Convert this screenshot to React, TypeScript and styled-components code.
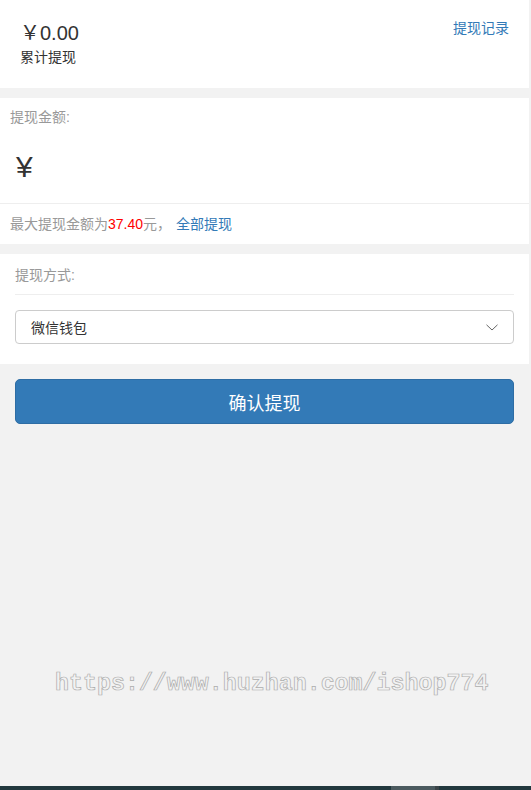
import React from "react";
import styled, { createGlobalStyle } from "styled-components";

const GlobalStyle = createGlobalStyle`
  html, body { margin: 0; padding: 0; background: #f2f2f2; }
  body {
    font-family: "Liberation Sans", "Noto Sans CJK SC", sans-serif;
    font-size: 14px;
    color: #333;
  }
  * { box-sizing: border-box; }
`;

const Page = styled.div`
  position: relative;
  min-height: 100vh;
  display: flex;
  flex-direction: column;
  background: #f2f2f2;
`;

const Panel = styled.section<{ $gap?: number }>`
  background: #fff;
  width: calc(100% - 2px);
  margin-bottom: ${(p) => p.$gap ?? 10}px;
`;

const Summary = styled(Panel)`
  height: 88px;
  padding: 19px 20px 0 20px;
  display: flex;
  justify-content: space-between;
  align-items: flex-start;
`;

const SummaryLeft = styled.div`
  display: flex;
  flex-direction: column;
`;

const Total = styled.div`
  font-size: 20px;
  line-height: 28px;
  color: #333;
`;

const TotalLabel = styled.div`
  font-size: 14px;
  line-height: 20px;
  color: #333;
`;

const RecordLink = styled.a`
  font-size: 14px;
  line-height: 20px;
  color: #337ab7;
  text-decoration: none;
  margin-top: -1px;
`;

const AmountPanel = styled(Panel)`
  padding-top: 9px;
`;

const FieldLabel = styled.div`
  padding: 0 10px;
  line-height: 20px;
  color: #999;
`;

const AmountRow = styled.div`
  display: flex;
  align-items: center;
  height: 40px;
  margin: 20px 0 16px;
  padding: 0 16px;
`;

const Yen = styled.span`
  font-family: "Liberation Sans", sans-serif;
  font-size: 30px;
  line-height: 40px;
  color: #333;
`;

const AmountInput = styled.input`
  flex: 1;
  border: none;
  outline: none;
  background: transparent;
  font-size: 30px;
  height: 40px;
  margin-left: 6px;
  padding: 0;
  color: #333;
`;

const Divider = styled.div`
  height: 1px;
  background: #eee;
`;

const Hint = styled.div`
  padding: 10px;
  line-height: 20px;
  color: #999;
`;

const Red = styled.span`
  color: #f00;
`;

const AllLink = styled.a`
  color: #337ab7;
  text-decoration: none;
  margin-left: 5px;
`;

const MethodPanel = styled(Panel)`
  padding: 11px 15px 20px;
`;

const MethodLabel = styled.div`
  line-height: 20px;
  color: #999;
  padding-bottom: 9px;
  border-bottom: 1px solid #eee;
`;

const SelectBox = styled.div`
  margin-top: 15px;
  height: 34px;
  border: 1px solid #ccc;
  border-radius: 4px;
  padding: 0 15px 0 15px;
  display: flex;
  align-items: center;
  justify-content: space-between;
  color: #333;
  font-size: 14px;
`;

const ButtonArea = styled.div`
  width: calc(100% - 2px);
  padding: 15px 15px 0;
`;

const SubmitButton = styled.button`
  width: 100%;
  height: 45px;
  background: #337ab7;
  border: 1px solid #2e6da4;
  border-radius: 5px;
  color: #fff;
  font-family: "Liberation Sans", "Noto Sans CJK SC", sans-serif;
  font-size: 18px;
  cursor: pointer;
`;

const Watermark = styled.div`
  position: absolute;
  left: 55px;
  top: 673px;
  font-family: "Liberation Mono", monospace;
  font-weight: bold;
  font-size: 23.3px;
  line-height: 1;
  color: #f2f2f2;
  -webkit-text-stroke: 0.7px #adadad;
  white-space: nowrap;
  pointer-events: none;
`;

const Footer = styled.div`
  margin-top: auto;
  height: 4px;
  display: flex;
  background: #22383e;
`;

const FooterSeg = styled.div<{ $w?: number; $c: string }>`
  ${(p) => (p.$w ? `width: ${p.$w}px;` : "flex: 1;")}
  background: ${(p) => p.$c};
`;

const Chevron = () => (
  <svg width="12" height="7" viewBox="0 0 12 7" fill="none">
    <polyline points="0.5,0.8 6,6 11.5,0.8" stroke="#666" strokeWidth="1" />
  </svg>
);

export default function App() {
  return (
    <Page>
      <GlobalStyle />
      <Summary>
        <SummaryLeft>
          <Total>￥0.00</Total>
          <TotalLabel>累计提现</TotalLabel>
        </SummaryLeft>
        <RecordLink href="#">提现记录</RecordLink>
      </Summary>

      <AmountPanel>
        <FieldLabel>提现金额:</FieldLabel>
        <AmountRow>
          <Yen>¥</Yen>
          <AmountInput type="text" />
        </AmountRow>
        <Divider />
        <Hint>
          最大提现金额为<Red>37.40</Red>元，<AllLink href="#">全部提现</AllLink>
        </Hint>
      </AmountPanel>

      <MethodPanel $gap={0}>
        <MethodLabel>提现方式:</MethodLabel>
        <SelectBox>
          <span>微信钱包</span>
          <Chevron />
        </SelectBox>
      </MethodPanel>

      <ButtonArea>
        <SubmitButton>确认提现</SubmitButton>
      </ButtonArea>

      <Watermark>https://www.huzhan.com/ishop774</Watermark>

      <Footer>
        <FooterSeg $c="#22383e" />
        <FooterSeg $w={44} $c="#4b5a5f" />
        <FooterSeg $w={4} $c="#3a4448" />
        <FooterSeg $w={92} $c="#22383e" />
      </Footer>
    </Page>
  );
}
